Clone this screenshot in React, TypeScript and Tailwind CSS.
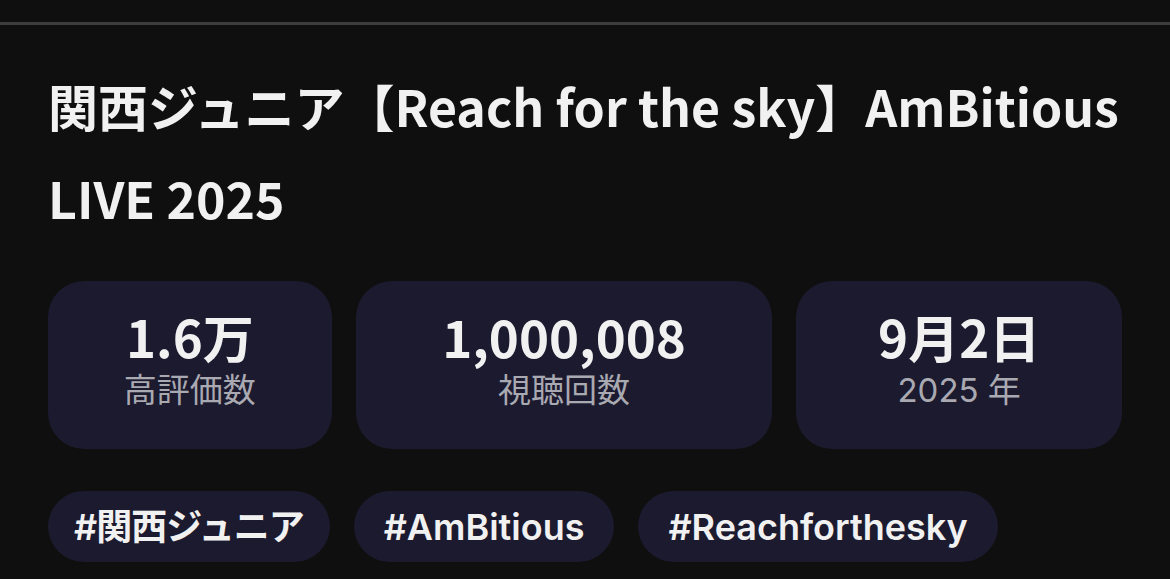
const stats = [
  { value: "1.6万", label: "高評価数", w: "w-[284px]" },
  { value: "1,000,008", label: "視聴回数", w: "w-[417px]" },
  { value: "9月2日", label: "2025 年", w: "w-[326px]" },
]

const tags = [
  { text: "#関西ジュニア", cls: "px-[26px] tracking-[-1px]" },
  { text: "#AmBitious", cls: "px-[30px]" },
  { text: "#Reachforthesky", cls: "px-[30px]" },
]

export default function App() {
  return (
    <div className="h-[579px] w-full overflow-hidden bg-[#0f0f0f] pt-[22px]">
      <div className="border-t-[3px] border-[#3c3c3c]" />
      <div className="px-[48px] pt-[34px]">
        <h1 className="font-['Noto_Sans_CJK_JP',sans-serif] text-[50px] font-bold leading-[92px] text-[#f1f1f1]">
          関西ジュニア【Reach for the sky】AmBitious LIVE 2025
        </h1>

        <div className="mt-[38px] flex gap-[24px]">
          {stats.map((s) => (
            <div
              key={s.label}
              className={`${s.w} flex h-[168px] flex-col items-center justify-center rounded-[36px] bg-[#1c1a2e] pb-[8px]`}
            >
              <div className="font-['Noto_Sans_CJK_JP',sans-serif] text-[51px] font-bold leading-[50px] text-[#f1f1f1]">
                {s.value}
              </div>
              <div className="mt-[8px] font-['Inter','Noto_Sans_CJK_JP',sans-serif] text-[33px] leading-[42px] text-[#a9a9b2]">
                {s.label}
              </div>
            </div>
          ))}
        </div>

        <div className="mt-[42px] flex gap-[24px]">
          {tags.map((t) => (
            <div
              key={t.text}
              className={`${t.cls} flex h-[71px] items-center rounded-full bg-[#1c1a2e] font-['Inter','Noto_Sans_CJK_JP',sans-serif] text-[36px] font-semibold text-[#f1f1f1]`}
            >
              {t.text}
            </div>
          ))}
        </div>
      </div>
    </div>
  )
}
